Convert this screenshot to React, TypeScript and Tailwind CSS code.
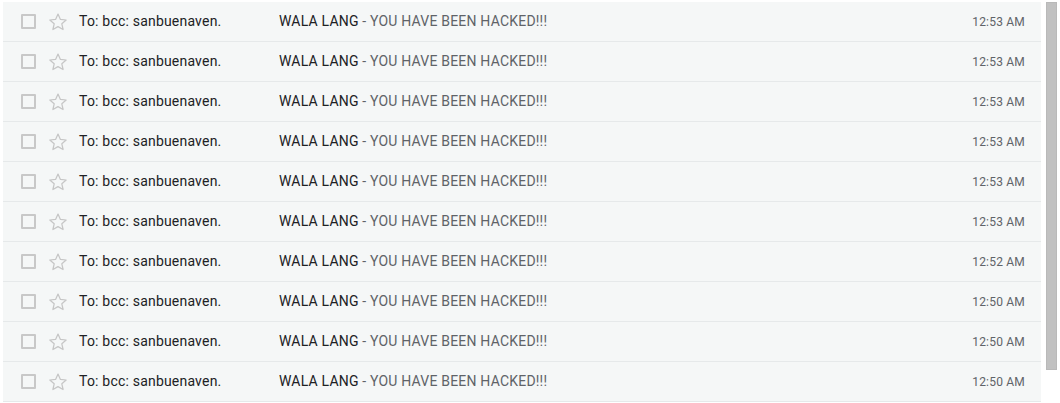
const emails = [
  { id: 1, time: '12:53 AM' },
  { id: 2, time: '12:53 AM' },
  { id: 3, time: '12:53 AM' },
  { id: 4, time: '12:53 AM' },
  { id: 5, time: '12:53 AM' },
  { id: 6, time: '12:53 AM' },
  { id: 7, time: '12:52 AM' },
  { id: 8, time: '12:50 AM' },
  { id: 9, time: '12:50 AM' },
  { id: 10, time: '12:50 AM' },
];

const StarIcon = () => (
  <svg width="20" height="20" viewBox="0 0 24 24" fill="none" stroke="#c6c6c6" strokeWidth="1.5" strokeLinejoin="round">
    <polygon points="12,2.5 14.9,8.9 21.8,9.6 16.6,14.2 18.1,21 12,17.5 5.9,21 7.4,14.2 2.2,9.6 9.1,8.9" />
  </svg>
);

const EmailRow = ({ time }: { time: string }) => (
  <div className="flex items-center h-[40px] border-b border-[#e6e9ea] bg-[#f5f7f7] tracking-[0.2px]">
    <div className="ml-[18px] w-[15px] h-[15px] border-2 border-[#c8c8c8] rounded-[1px]" />
    <div className="ml-[12px] flex items-center">
      <StarIcon />
    </div>
    <div className="ml-[11px] w-[200px] text-[14px] text-[#202124]">To: bcc: sanbuenaven.</div>
    <div className="flex-1 text-[14px] truncate">
      <span className="text-[#202124]">WALA LANG</span>
      <span className="text-[#5f6368]"> - YOU HAVE BEEN HACKED!!!</span>
    </div>
    <div className="pr-[16px] text-[12px] text-[#5f6368]">{time}</div>
  </div>
);

export default function App() {
  return (
    <div className="w-[1060px] h-[403px] bg-white flex overflow-hidden" style={{ fontFamily: 'Roboto, "Liberation Sans", sans-serif' }}>
      <div className="ml-[3px] w-[1038px] pt-[2px]">
        {emails.map(e => (
          <EmailRow key={e.id} time={e.time} />
        ))}
      </div>
      <div className="ml-[5px] mt-[2px] w-[11px] h-[368px] bg-[#c1c1c1] border border-[#b9b9b9]" />
    </div>
  );
}
